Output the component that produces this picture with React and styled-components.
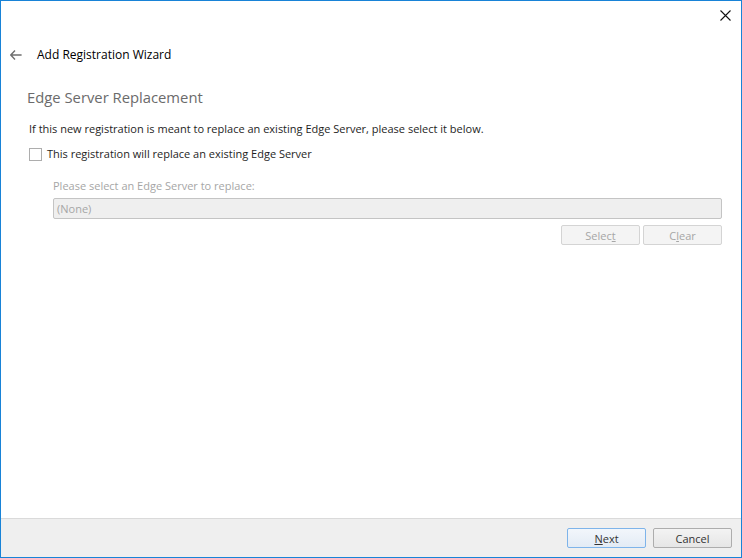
import React from "react";
import styled, { createGlobalStyle } from "styled-components";

const GlobalStyle = createGlobalStyle`
  html, body {
    margin: 0;
    padding: 0;
    background: #ffffff;
  }
  body {
    font-family: "Open Sans", "Noto Sans", sans-serif;
    font-size: 11px;
    color: #1e1e1e;
  }
`;

export default function App() {
  return (
    <>
      <GlobalStyle />
      <Window>
        <TitleBar>
          <CloseButton aria-label="Close">
            <svg width="11" height="11" viewBox="0 0 11 11">
              <path d="M0.5 0.5 L10.5 10.5 M10.5 0.5 L0.5 10.5" stroke="#111" strokeWidth="1.1" fill="none" />
            </svg>
          </CloseButton>
        </TitleBar>
        <Header>
          <BackButton aria-label="Back">
            <svg width="12" height="10" viewBox="0 0 12 10">
              <path d="M5 0.6 L0.8 5 L5 9.4 M0.8 5 H11.6" stroke="#6f6f6f" strokeWidth="1.4" fill="none" />
            </svg>
          </BackButton>
          <WizardTitle>Add Registration Wizard</WizardTitle>
        </Header>
        <Body>
          <PageTitle>Edge Server Replacement</PageTitle>
          <Intro>If this new registration is meant to replace an existing Edge Server, please select it below.</Intro>
          <CheckRow>
            <Box />
            <span>
              This re<u>g</u>istration will replace an existing Edge Server
            </span>
          </CheckRow>
          <Picker>
            <FieldLabel>Please select an Edge Server to replace:</FieldLabel>
            <Field>(None)</Field>
            <ButtonRow>
              <Button disabled>
                Selec<u>t</u>
              </Button>
              <Button disabled>
                C<u>l</u>ear
              </Button>
            </ButtonRow>
          </Picker>
        </Body>
        <Footer>
          <Button $primary>
            <u>N</u>ext
          </Button>
          <Button>Cancel</Button>
        </Footer>
      </Window>
    </>
  );
}

const Window = styled.div`
  box-sizing: border-box;
  width: 742px;
  height: 558px;
  border: 1px solid #1883d7;
  display: flex;
  flex-direction: column;
  background: #ffffff;
`;

const TitleBar = styled.div`
  height: 30px;
  display: flex;
  justify-content: flex-end;
`;

const CloseButton = styled.div`
  width: 30px;
  height: 29px;
  display: flex;
  align-items: center;
  justify-content: center;
  margin-right: 1px;
`;

const Header = styled.div`
  height: 47px;
  display: flex;
  align-items: center;
  padding-left: 9px;
`;

const BackButton = styled.div`
  width: 12px;
  height: 10px;
  display: flex;
  margin-right: 15px;
`;

const WizardTitle = styled.div`
  font-size: 12px;
  color: #000;
`;

const Body = styled.div`
  flex: 1;
  padding: 7px 19px 0 26px;
`;

const PageTitle = styled.div`
  font-size: 14.8px;
  color: #6b6b6b;
  line-height: 24px;
  margin-bottom: 12px;
`;

const Intro = styled.div`
  line-height: 16px;
  margin-left: 2px;
`;

const CheckRow = styled.div`
  display: flex;
  align-items: center;
  gap: 5px;
  margin: 9px 0 0 2px;
  line-height: 16px;
  u {
    text-decoration-thickness: 1px;
  }
`;

const Box = styled.span`
  box-sizing: border-box;
  width: 13px;
  height: 13px;
  border: 1px solid #adadad;
  background: #fff;
`;

const Picker = styled.div`
  margin: 16px 0 0 26px;
  display: flex;
  flex-direction: column;
`;

const FieldLabel = styled.div`
  color: #a6a6a6;
  line-height: 16px;
  margin-bottom: 4px;
`;

const Field = styled.div`
  box-sizing: border-box;
  height: 21px;
  border: 1px solid #c4c4c4;
  border-radius: 2px;
  background: #efefef;
  color: #a6a6a6;
  padding-left: 3px;
  display: flex;
  align-items: center;
`;

const ButtonRow = styled.div`
  display: flex;
  justify-content: flex-end;
  gap: 3px;
  margin-top: 6px;
`;

const Button = styled.button`
  box-sizing: border-box;
  width: 79px;
  height: 20px;
  padding: 0;
  font-family: inherit;
  font-size: 11px;
  border-radius: 2px;
  border: 1px solid ${(p) => (p.$primary ? "#7eb4ea" : p.disabled ? "#d4d4d4" : "#adadad")};
  background: ${(p) =>
    p.$primary
      ? "linear-gradient(#f2f6fb, #e3ebf5)"
      : p.disabled
      ? "#f4f4f4"
      : "linear-gradient(#f3f3f3, #e6e6e6)"};
  color: ${(p) => (p.disabled ? "#a6a6a6" : "#333")};
`;

const Footer = styled.div`
  height: 38px;
  border-top: 1px solid #dadada;
  background: #efefef;
  display: flex;
  align-items: center;
  justify-content: flex-end;
  gap: 7px;
  padding-right: 9px;
`;
